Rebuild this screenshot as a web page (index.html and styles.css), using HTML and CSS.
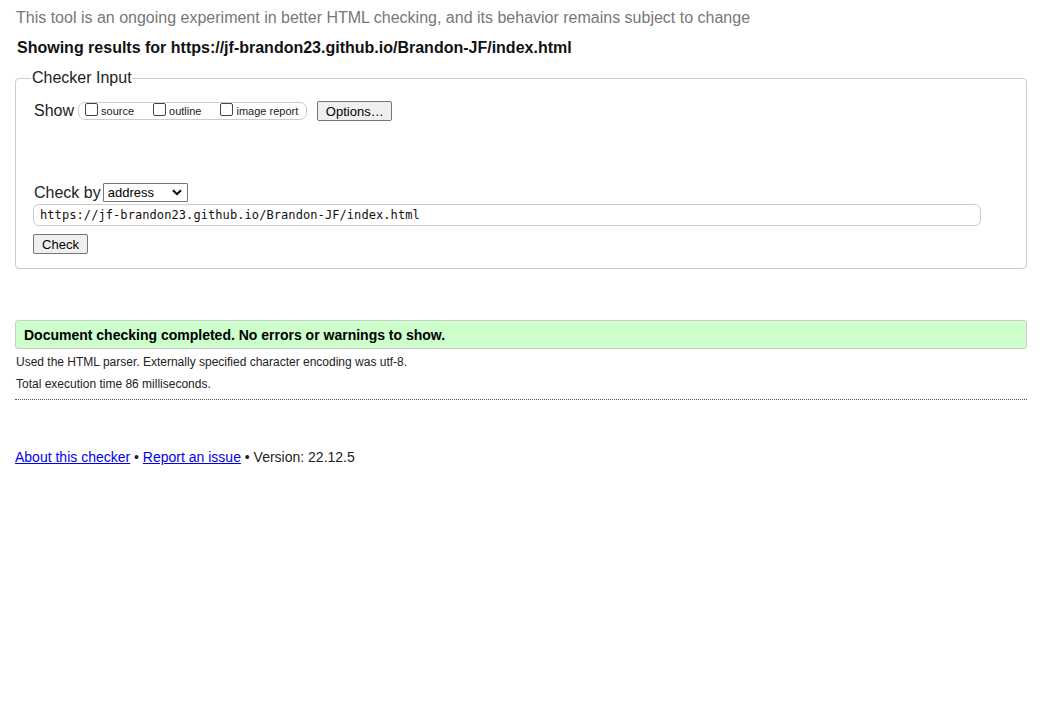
FILE: index.html
```html
<!DOCTYPE html>
<html>
<head>
<meta charset="utf-8">
<link rel="stylesheet" href="styles.css">
</head>
<body>
<div class="page">
  <p class="note">This tool is an ongoing experiment in better HTML checking, and its behavior remains subject to change</p>
  <h2 class="results">Showing results for https://jf-brandon23.github.io/Brandon-JF/index.html</h2>
  <fieldset class="checker">
    <legend>Checker Input</legend>
    <div class="show-row">
      <span class="lbl">Show</span>
      <span class="opts">
        <label><span class="cb"></span>source</label>
        <label><span class="cb"></span>outline</label>
        <label><span class="cb"></span>image report</label>
      </span>
      <span class="btn opt-btn">Options…</span>
    </div>
    <div class="checkby-row">
      <span class="lbl">Check by</span>
      <span class="select">address<svg width="10" height="7" viewBox="0 0 10 7"><path d="M1 1.2 L5 5.2 L9 1.2" fill="none" stroke="#000" stroke-width="2"/></svg></span>
    </div>
    <div class="url">https://jf-brandon23.github.io/Brandon-JF/index.html</div>
    <div class="check-row"><span class="btn check-btn">Check</span></div>
  </fieldset>
  <div class="success">Document checking completed. No errors or warnings to show.</div>
  <p class="details first">Used the HTML parser. Externally specified character encoding was utf-8.</p>
  <p class="details second">Total execution time 86 milliseconds.</p>
  <hr class="dots">
  <p class="footer"><a href="#">About this checker</a> • <a href="#">Report an issue</a> • Version: 22.12.5</p>
</div>
</body>
</html>
```
FILE: styles.css
```css
html, body { margin: 0; padding: 0; background: #fff; }
body { font-family: "Liberation Sans", Arial, sans-serif; color: #111; }
.page { padding: 0 25px 0 15px; }
.note { margin: 0; padding-top: 8px; font-size: 16px; line-height: 19px; color: #777; padding-left: 1px; }
.results { margin: 11px 0 0 2px; font-size: 16px; line-height: 19px; font-weight: bold; color: #111; }
.checker {
  margin: 12px 0 0 0;
  border: 1px solid #ccc;
  border-radius: 4px;
  padding: 0 18px 14px 18px;
}
.checker legend { font-size: 16px; padding: 0 1px; margin-left: -3px; color: #222; line-height: 18px; }
.show-row { display: flex; align-items: center; margin-top: 13px; height: 22px; }
.lbl { font-size: 16px; color: #222; }
.opts {
  display: inline-flex; align-items: center; gap: 0;
  border: 1px solid #ccc; border-radius: 7px;
  height: 18px; margin-left: 4px; padding: 0 8px 0 6px; box-sizing: border-box;
}
.opts label { display: inline-flex; align-items: center; font-size: 11px; color: #222; margin-right: 19px; height: 16px; }
.opts label:last-child { margin-right: 0; }
.cb {
  display: inline-block; width: 13px; height: 13px; border: 1px solid #444;
  border-radius: 2px; margin-right: 3px; box-sizing: border-box; margin-top: -3px;
}
.btn {
  display: inline-flex; align-items: center; justify-content: center;
  background: #efefef; border: 1px solid #767676; border-radius: 2px;
  box-sizing: border-box; color: #000; font-size: 13px;
}
.opt-btn { width: 75px; height: 20px; margin-left: 10px; }
.checkby-row { display: flex; align-items: center; margin-top: 61px; height: 19px; }
.select {
  display: inline-flex; align-items: center; justify-content: space-between;
  width: 85px; height: 19px; box-sizing: border-box; margin-left: 2px;
  border: 1px solid #767676; border-radius: 1px; font-size: 13px; color: #000;
  padding: 0 5px 0 4px;
}
.url {
  margin-top: 2px; margin-left: -1px; width: 948px; height: 22px; box-sizing: border-box;
  border: 1px solid #ccc; border-radius: 6px;
  font-family: "DejaVu Sans Mono", "Liberation Mono", monospace; font-size: 12px; letter-spacing: 0.08px;
  display: flex; align-items: center; padding-left: 6px; color: #111;
}
.check-row { margin-top: 8px; margin-left: -1px; }
.check-btn { width: 55px; height: 20px; }
.success {
  margin-top: 51px; height: 29px; box-sizing: border-box;
  background: #ccffcc; border: 1px solid #ccc; border-radius: 3px;
  font-weight: bold; font-size: 14px; display: flex; align-items: center; padding-left: 8px; color: #000;
}
.details { margin: 0; font-size: 12px; line-height: 21px; color: #222; padding-left: 1px; }
.details.first { margin-top: 3px; }
.details.second { margin-top: 1px; }
.dots { border: 0; border-top: 1px dotted #555; margin: 4px 0 0 0; height: 0; }
.footer { margin: 49px 0 0 0; font-size: 14px; color: #222; }
.footer a { color: #0000ee; }
```
